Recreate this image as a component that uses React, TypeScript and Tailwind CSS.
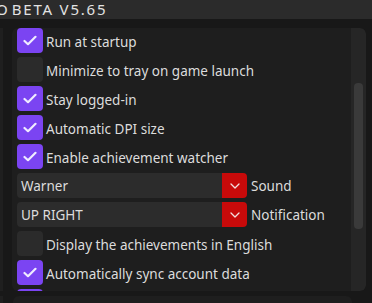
import React from "react";

const font = { fontFamily: '"Noto Sans", "Open Sans", sans-serif' };

function Check({ on }: { on: boolean }) {
  return (
    <div
      className={
        "w-[26px] h-[25px] rounded-[4px] flex items-center justify-center shrink-0 " +
        (on ? "bg-[#7b44f2]" : "bg-[#2b2b2b]")
      }
    >
      {on && (
        <svg width="14" height="11" viewBox="0 0 14 11" fill="none">
          <path d="M1.5 6 L5 9.2 L12.5 1.8" stroke="#eeeaff" strokeWidth="2.2" strokeLinecap="round" strokeLinejoin="round" />
        </svg>
      )}
    </div>
  );
}

function CheckRow({ on, label }: { on: boolean; label: string }) {
  return (
    <div className="flex items-center h-[25px] shrink-0 gap-[3px]">
      <Check on={on} />
      <span className="pt-[3px] text-[13.5px] text-[#dcdcdc] whitespace-nowrap">{label}</span>
    </div>
  );
}

function Select({ value, label }: { value: string; label: string }) {
  return (
    <div className="flex items-center h-[25px] shrink-0">
      <div className="w-[205px] h-full bg-[#2c2c2c] rounded-l-[4px] flex items-center pl-[4px] pt-[2px] text-[13.5px] text-[#dcdcdc]">
        {value}
      </div>
      <div className="w-[25px] h-full bg-[#c80a0a] rounded-r-[4px] flex items-center justify-center">
        <svg width="10" height="6" viewBox="0 0 10 6" fill="none">
          <path d="M1 1 L5 5 L9 1" stroke="#f3dede" strokeWidth="1.3" strokeLinecap="round" strokeLinejoin="round" />
        </svg>
      </div>
      <span className="ml-[4px] pt-[2px] text-[13.5px] text-[#dcdcdc] whitespace-nowrap">{label}</span>
    </div>
  );
}

export default function App() {
  return (
    <div className="w-[372px] h-[303px] bg-[#181818] overflow-hidden flex flex-col" style={font}>
      <div className="h-[19px] bg-[#2b2b2b] shrink-0 overflow-hidden flex items-center text-[15px] leading-none tracking-[1.8px] text-[#e2e2e2] whitespace-nowrap">
        <span className="ml-[-4px] tracking-normal">O</span>
        <span className="ml-[4px]">BETA V5.65</span>
      </div>
      <div className="flex pt-[9px] shrink-0">
        <div className="w-[3px] h-[263px] bg-[#1f1f1f]" />
        <div className="ml-[9px] w-[354px] h-[263px] rounded-[6px] bg-[#1e1e1e] flex overflow-hidden">
          <div className="flex-1 overflow-hidden pl-[5px] flex flex-col gap-[4px]">
            <CheckRow on label="Run at startup" />
            <CheckRow on={false} label="Minimize to tray on game launch" />
            <CheckRow on label="Stay logged-in" />
            <CheckRow on label="Automatic DPI size" />
            <CheckRow on label="Enable achievement watcher" />
            <Select value="Warner" label="Sound" />
            <Select value="UP RIGHT" label="Notification" />
            <CheckRow on={false} label="Display the achievements in English" />
            <CheckRow on label="Automatically sync account data" />
            <CheckRow on label="" />
          </div>
          <div className="w-[15px] h-full bg-[#262626] rounded-r-[6px] pt-[55px] px-[3px]">
            <div className="h-[146px] rounded-[4px] bg-[#3a3a3a]" />
          </div>
        </div>
      </div>
      <div className="flex pt-[5px]">
        <div className="w-[3px] h-[20px] bg-[#1f1f1f]" />
        <div className="ml-[10px] w-[339px] h-[20px] rounded-t-[6px] bg-[#1e1e1e]" />
      </div>
    </div>
  );
}
